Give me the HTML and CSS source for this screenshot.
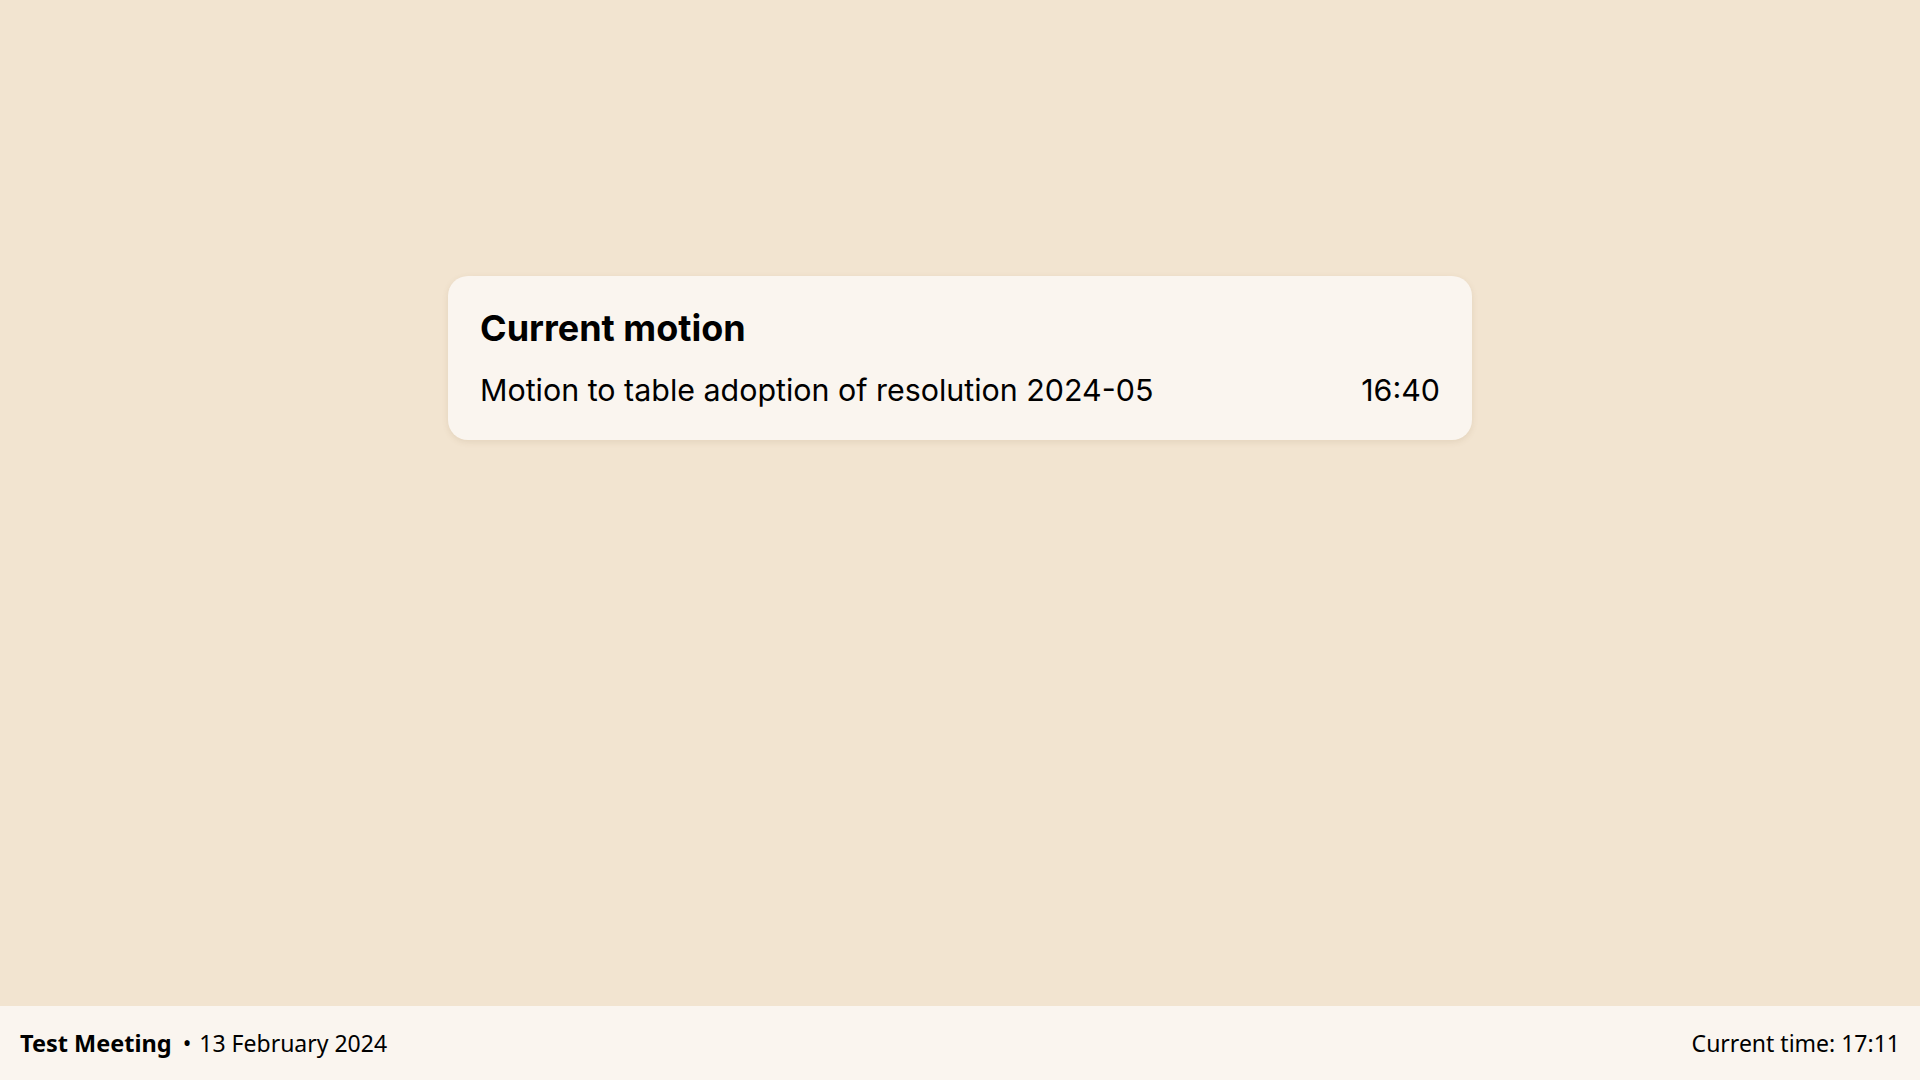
FILE: index.html
```html
<!DOCTYPE html>
<html lang="en">
<head>
<meta charset="utf-8">
<title>Meeting display</title>
<link rel="stylesheet" href="styles.css">
</head>
<body>
<div class="screen">
  <main class="main">
    <section class="card">
      <h2 class="card-title">Current motion</h2>
      <div class="motion-row">
        <span class="motion-text">Motion to table adoption of resolution 2024-05</span>
        <span class="motion-time">16:40</span>
      </div>
    </section>
  </main>
  <footer class="footer">
    <div class="meeting"><strong class="meeting-name">Test Meeting</strong><span class="sep">•</span><span class="meeting-date">13 February 2024</span></div>
    <div class="clock">Current time: 17:11</div>
  </footer>
</div>
</body>
</html>
```

FILE: styles.css
```css
html, body {
  margin: 0;
  padding: 0;
  height: 100%;
}

body {
  background: #f2e4d0;
  color: #000;
  font-family: "Inter", "Noto Sans", sans-serif;
}

.screen {
  display: flex;
  flex-direction: column;
  height: 100vh;
}

.main {
  flex: 1;
  display: flex;
  justify-content: center;
  align-items: flex-start;
  padding-top: 276px;
}

.card {
  width: 1024px;
  box-sizing: border-box;
  padding: 31px 32px 32px;
  background: #faf5ef;
  border-radius: 20px;
  box-shadow: 0 2px 6px rgba(120, 90, 50, 0.12);
}

.card-title {
  margin: 0 0 21px 0;
  font-size: 36px;
  font-weight: 700;
  line-height: 1.21;
}

.motion-row {
  display: flex;
  justify-content: space-between;
  align-items: baseline;
  font-size: 30.4px;
  line-height: 1.2;
}

.footer {
  height: 74px;
  flex: none;
  background: #faf5ef;
  display: flex;
  justify-content: space-between;
  align-items: center;
  padding: 0 20px;
  font-family: "Noto Sans", "Open Sans", sans-serif;
  font-size: 23px;
}

.meeting-name {
  font-weight: 700;
  font-size: 23.5px;
}

.sep {
  margin: 0 8px 0 11px;
}
```
